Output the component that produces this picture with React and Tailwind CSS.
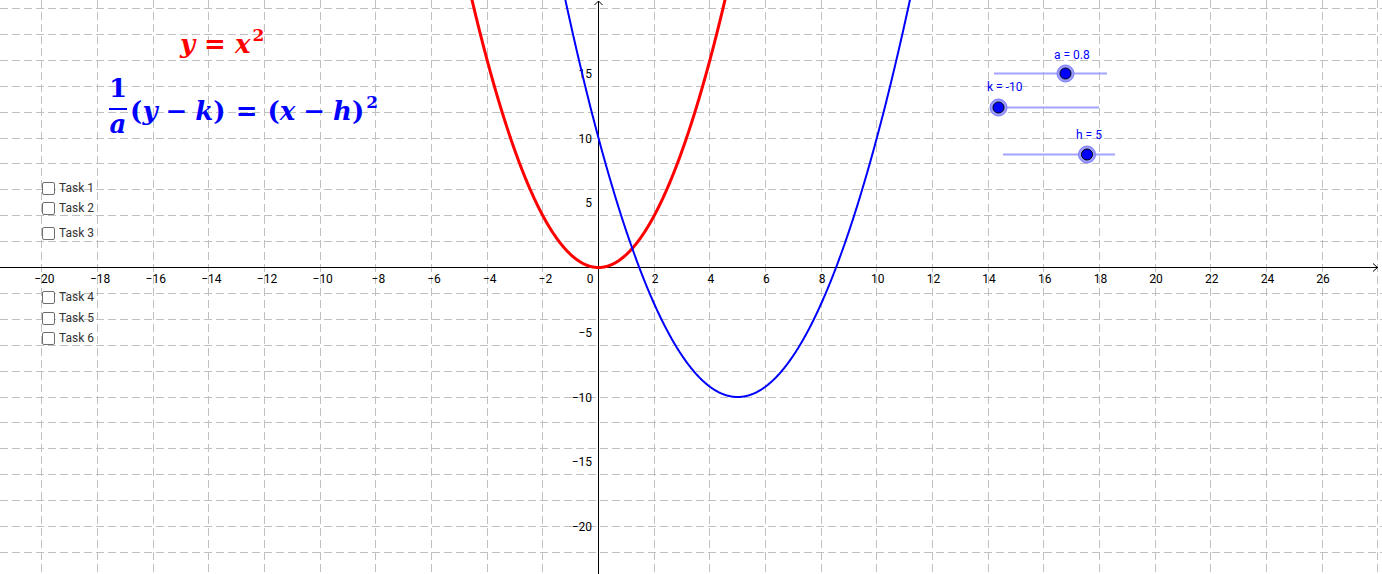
import React from "react";

// graph coordinate system (px per unit differs on x and y)
const OX = 598.5;
const OY = 267.5;
const SX = 27.83;
const SY = 12.95;
const W = 1382;
const H = 574;

const px = (u) => OX + u * SX;
const py = (v) => OY - v * SY;
const crisp = (n) => Math.floor(n) + 0.5;

function plot(f, from, to) {
  const pts = [];
  for (let i = 0; i <= 800; i++) {
    const u = from + ((to - from) * i) / 800;
    pts.push(px(u).toFixed(2) + "," + py(f(u)).toFixed(2));
  }
  return pts.join(" ");
}

const xGrid = [];
for (let u = -20; u <= 28; u += 2) xGrid.push(u);
const yGrid = [];
for (let v = -22; v <= 20; v += 2) yGrid.push(v);
const yLabels = [-20, -15, -10, -5, 5, 10, 15];

const num = (n) => (n < 0 ? "\u2212" + Math.abs(n) : String(n));

const sliders = [
  { label: "a = 0.8", x1: 994, x2: 1107, y: 73.5, knob: 1065.5, lx: 1054, ly: 59 },
  { label: "k = -10", x1: 993, x2: 1099, y: 107.5, knob: 998.5, lx: 987, ly: 91 },
  { label: "h = 5", x1: 1003, x2: 1115, y: 154.5, knob: 1087, lx: 1076, ly: 139 },
];

const tasks = [
  { label: "Task 1", top: "top-[182px]" },
  { label: "Task 2", top: "top-[202px]" },
  { label: "Task 3", top: "top-[227px]" },
  { label: "Task 4", top: "top-[291px]" },
  { label: "Task 5", top: "top-[312px]" },
  { label: "Task 6", top: "top-[332px]" },
];

function Graph() {
  return (
    <svg width={W} height={H} className="block font-['Roboto',sans-serif] text-[12px]">
      <g stroke="#c0c0c0" strokeWidth="1" strokeDasharray="8 4">
        {xGrid
          .filter((u) => u !== 0)
          .map((u) => (
            <line key={"vx" + u} x1={crisp(px(u))} y1={0} x2={crisp(px(u))} y2={H} />
          ))}
        {yGrid
          .filter((v) => v !== 0)
          .map((v) => (
            <line key={"hy" + v} x1={0} y1={crisp(py(v))} x2={W} y2={crisp(py(v))} />
          ))}
      </g>

      {/* axes */}
      <g stroke="#000" strokeWidth="1" fill="none">
        <line x1={0} y1={OY} x2={1378} y2={OY} />
        <line x1={OX} y1={1} x2={OX} y2={H} />
        <polyline points={`${OX - 4},5 ${OX},1 ${OX + 4},5`} />
        <polyline points={`1373,${OY - 4} 1377.5,${OY} 1373,${OY + 4}`} />
      </g>

      <g fill="#000">
        {xGrid
          .filter((u) => u !== 0 && u !== 28)
          .map((u) => (
            <text key={"lx" + u} x={px(u) + (u < 0 ? 2.5 : 1)} y={283} textAnchor="middle">
              {num(u)}
            </text>
          ))}
        <text x={590} y={283} textAnchor="middle">0</text>
        {yLabels.map((v) => (
          <text key={"ly" + v} x={592} y={py(v) + 4.5} textAnchor="end">
            {num(v)}
          </text>
        ))}
      </g>

      {/* y = x^2 */}
      <polyline
        points={plot((u) => u * u, -4.75, 4.75)}
        fill="none"
        stroke="#ff0000"
        strokeWidth="3"
        strokeLinejoin="round"
      />
      {/* 1/a (y-k) = (x-h)^2 with a=0.8, k=-10, h=5 */}
      <polyline
        points={plot((u) => 0.8 * (u - 5) * (u - 5) - 10, -1.4, 11.4)}
        fill="none"
        stroke="#0000ff"
        strokeWidth="2"
        strokeLinejoin="round"
      />

      {sliders.map((s) => (
        <g key={s.label}>
          <line x1={s.x1} y1={s.y} x2={s.x2} y2={s.y} stroke="#a4a4ff" strokeWidth="2" />
          <circle cx={s.knob} cy={s.y} r="8.5" fill="#9c9cff" stroke="#7a7aff" strokeWidth="1" />
          <circle cx={s.knob} cy={s.y} r="5.5" fill="#0000ff" stroke="#000" strokeWidth="1" />
          <text x={s.lx} y={s.ly} fill="#0000ff">
            {s.label}
          </text>
        </g>
      ))}
    </svg>
  );
}

function Formulas() {
  return (
    <>
      <div className="absolute left-[180px] top-[31px] whitespace-nowrap font-['DejaVu_Serif',serif] text-[26px] font-bold leading-none text-[#ff0000]">
        <span className="italic">y</span>
        <span className="mx-[9px]">=</span>
        <span className="italic">x</span>
        <span className="relative -top-[12px] ml-[2px] text-[17px]">2</span>
      </div>

      <div className="absolute left-[109px] top-[75px] flex items-start whitespace-nowrap font-['DejaVu_Serif',serif] text-[26px] font-bold leading-none text-[#0000ff]">
        <div className="flex flex-col items-center">
          <span>1</span>
          <span className="mt-[7px] h-[2px] w-[18px] bg-[#0000ff]" />
          <span className="mt-[1px] italic">a</span>
        </div>
        <div className="ml-[3px] mt-[23px]">
          <span>(</span>
          <span className="italic">y</span>
          <span className="mx-[8px]">−</span>
          <span className="italic">k</span>
          <span>)</span>
          <span className="mx-[10px]">=</span>
          <span>(</span>
          <span className="italic">x</span>
          <span className="mx-[8px]">−</span>
          <span className="italic">h</span>
          <span>)</span>
          <span className="relative -top-[12px] ml-[2px] text-[17px]">2</span>
        </div>
      </div>
    </>
  );
}

function Tasks() {
  return tasks.map((t) => (
    <label key={t.label} className={"absolute left-[42px] flex items-center gap-[4px] " + t.top}>
      <span className="h-[13px] w-[13px] rounded-[2px] border-[1.5px] border-[#6e6e6e] bg-white" />
      <span className="font-['Roboto',sans-serif] text-[12px] leading-[13px] text-[#333]">{t.label}</span>
    </label>
  ));
}

export default function App() {
  return (
    <div className="relative h-[574px] w-[1382px] overflow-hidden bg-white">
      <Graph />
      <Formulas />
      <Tasks />
    </div>
  );
}
